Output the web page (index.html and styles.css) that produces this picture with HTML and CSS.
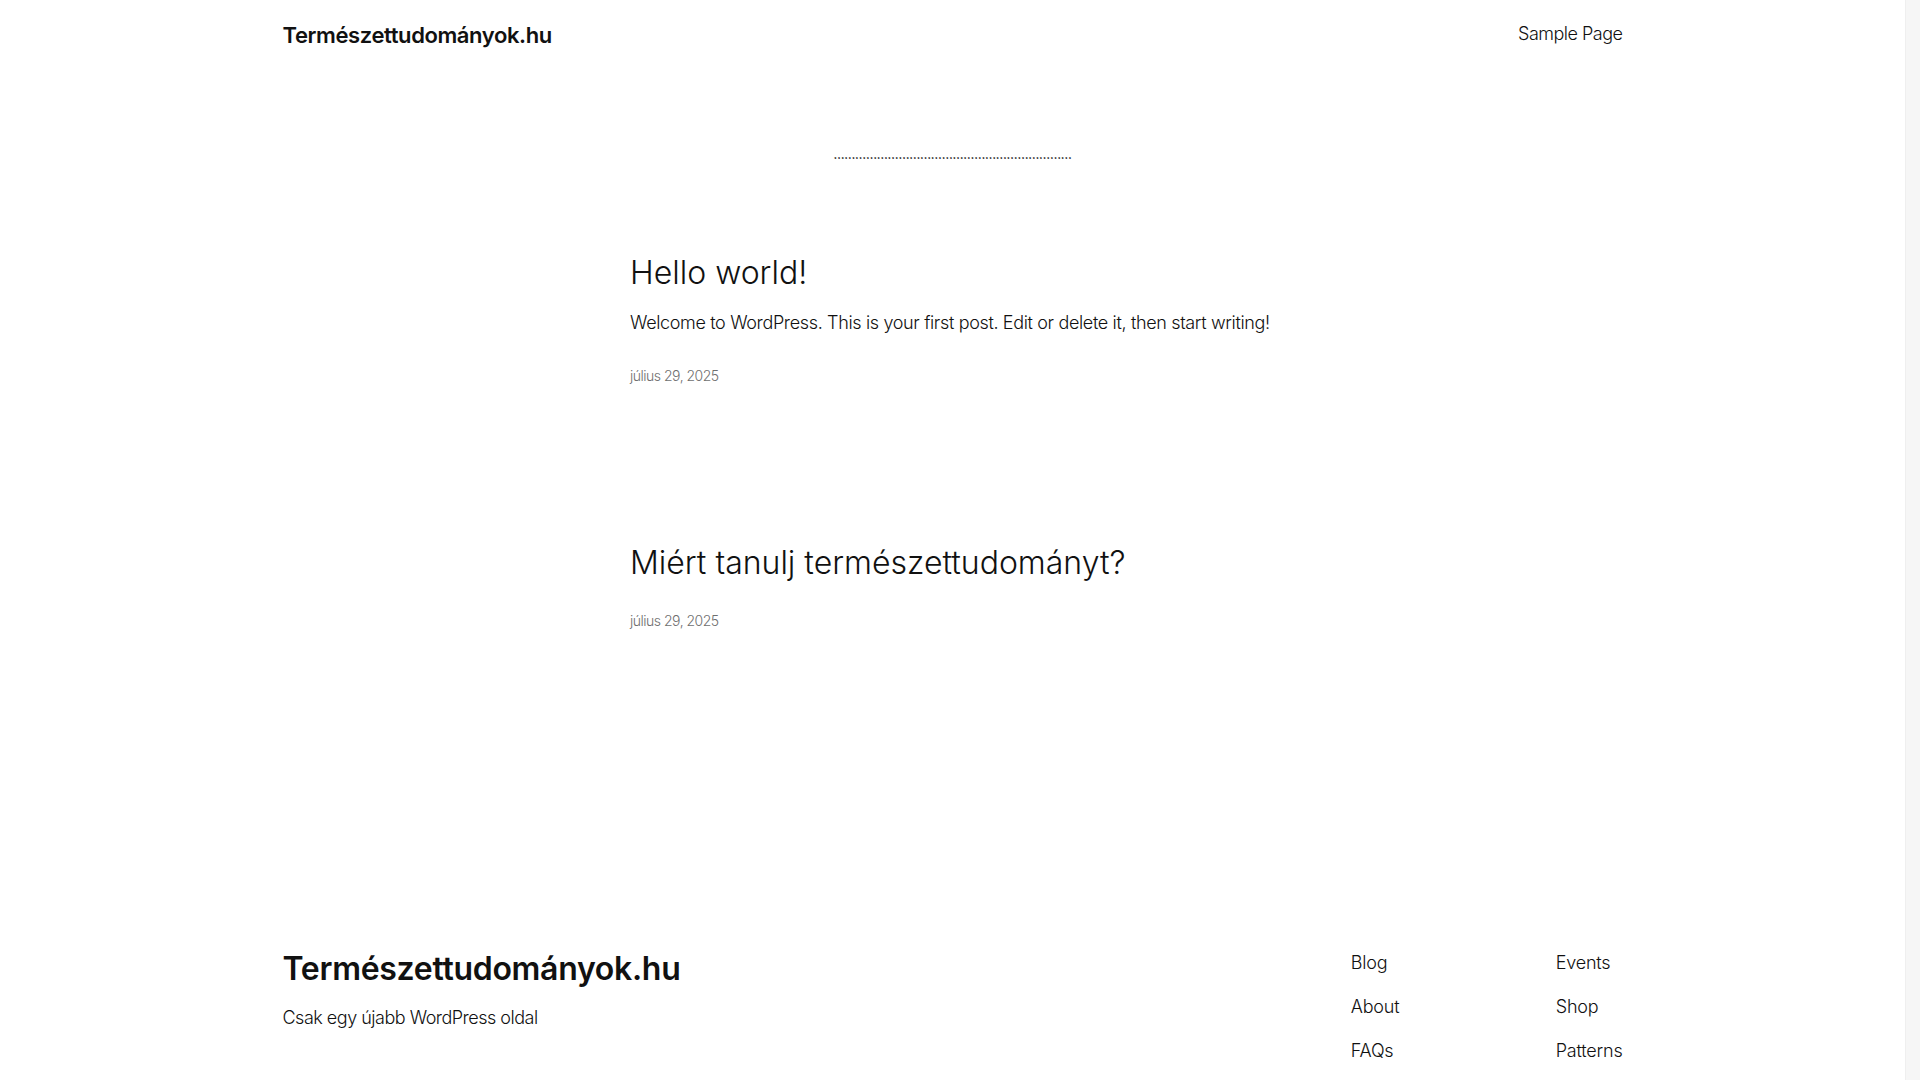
FILE: index.html
```html
<!DOCTYPE html>
<html lang="hu">
<head>
<meta charset="utf-8">
<title>Természettudományok.hu</title>
<link rel="stylesheet" href="styles.css">
</head>
<body>
<div class="scrollbar" aria-hidden="true"></div>
<header class="site-header">
  <a class="site-title" href="#">Természettudományok.hu</a>
  <nav class="main-nav"><a href="#">Sample Page</a></nav>
</header>
<main class="site-main">
  <h1 class="page-title">…………………………………………………………</h1>
  <ul class="post-list">
    <li class="post">
      <h2 class="post-title"><a href="#">Hello world!</a></h2>
      <p class="post-excerpt">Welcome to WordPress. This is your first post. Edit or delete it, then start writing!</p>
      <time class="post-date">július 29, 2025</time>
    </li>
    <li class="post">
      <h2 class="post-title"><a href="#">Miért tanulj természettudományt?</a></h2>
      <time class="post-date">július 29, 2025</time>
    </li>
  </ul>
</main>
<footer class="site-footer">
  <div class="footer-inner">
    <div class="footer-brand">
      <a class="footer-title" href="#">Természettudományok.hu</a>
      <p class="tagline">Csak egy újabb WordPress oldal</p>
    </div>
    <nav class="footer-nav">
      <ul class="footer-col">
        <li><a href="#">Blog</a></li>
        <li><a href="#">About</a></li>
        <li><a href="#">FAQs</a></li>
      </ul>
      <ul class="footer-col">
        <li><a href="#">Events</a></li>
        <li><a href="#">Shop</a></li>
        <li><a href="#">Patterns</a></li>
      </ul>
    </nav>
  </div>
</footer>
</body>
</html>
```
FILE: styles.css
```css
html, body {
  margin: 0;
  padding: 0;
  background: #ffffff;
}
body {
  margin-right: 15px;
  font-family: Inter, "Noto Sans", "Liberation Sans", sans-serif;
  font-weight: 300;
  font-size: 18px;
  color: #111111;
  letter-spacing: -0.45px;
}
.scrollbar {
  position: fixed;
  top: 0;
  right: 0;
  width: 15px;
  height: 100vh;
  background: #f6f6f6;
  border-left: 1px solid #efefef;
  box-sizing: border-box;
}
a {
  color: inherit;
  text-decoration: none;
}
ul {
  list-style: none;
  margin: 0;
  padding: 0;
}
p, h1, h2 {
  margin: 0;
}

.site-header {
  max-width: 1340px;
  margin: 0 auto;
  height: 68px;
  display: flex;
  align-items: center;
  justify-content: space-between;
}
.site-title {
  font-size: 22px;
  font-weight: 600;
  letter-spacing: -0.4px;
  line-height: 28px;
  margin-top: 1px;
}
.main-nav a {
  font-size: 18px;
  line-height: 28px;
  letter-spacing: -0.5px;
}

.site-main {
  width: 645px;
  margin: 0 auto;
  padding-top: 77px;
}
.page-title {
  font-weight: 700;
  font-size: 11px;
  line-height: 20px;
  text-align: center;
  letter-spacing: -0.2px;
  white-space: nowrap;
  margin: 0 -100px;
}
.post-list {
  margin-top: 89px;
}
.post {
  display: flex;
  flex-direction: column;
  align-items: flex-start;
}
.post + .post {
  margin-top: 158px;
}
.post-title {
  font-weight: 300;
  font-size: 32px;
  line-height: 38px;
  letter-spacing: 0;
}
.post-excerpt {
  margin-top: 17px;
  font-size: 18px;
  line-height: 28px;
  letter-spacing: -0.35px;
}
.post-date {
  margin-top: 29px;
  font-size: 14px;
  line-height: 20px;
  color: #6f6f6f;
  letter-spacing: -0.5px;
}

.site-footer {
  max-width: 1340px;
  margin: 318px auto 0;
  padding-bottom: 200px;
}
.footer-inner {
  display: flex;
  justify-content: space-between;
  align-items: flex-start;
}
.footer-brand {
  display: flex;
  flex-direction: column;
  gap: 16px;
}
.footer-title {
  font-size: 32px;
  font-weight: 600;
  line-height: 38px;
  letter-spacing: -0.3px;
  margin-top: 1px;
}
.tagline {
  font-size: 18px;
  line-height: 28px;
  letter-spacing: -0.5px;
}
.footer-nav {
  display: grid;
  grid-template-columns: 205px auto;
}
.footer-col {
  display: flex;
  flex-direction: column;
  gap: 16px;
}
.footer-col a {
  font-size: 18px;
  line-height: 28px;
  letter-spacing: -0.2px;
}
```
